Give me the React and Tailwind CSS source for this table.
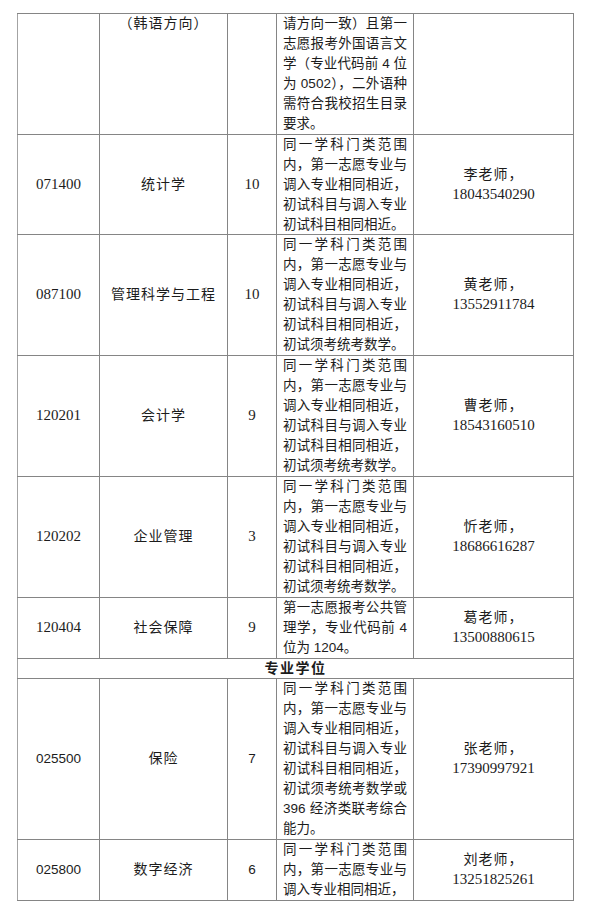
import React from 'react';

const CJK = "font-['Liberation_Sans','Noto_Sans_CJK_SC',sans-serif]";
const SERIF = "font-['Liberation_Serif','Noto_Sans_CJK_SC',serif]";

const SAME = ['同一学科门类范围', '内，第一志愿专业与', '调入专业相同相近，', '初试科目与调入专业'];

const rows = [
  {
    code: '',
    name: '（韩语方向）',
    nameTop: true,
    count: '',
    notes: ['请方向一致）且第一', '志愿报考外国语言文', '学（专业代码前 4 位', '为 0502），二外语种', '需符合我校招生目录', '要求。'],
    contact: null,
  },
  {
    code: '071400',
    name: '统计学',
    count: '10',
    notes: [...SAME, '初试科目相同相近。'],
    contact: ['李老师，', '18043540290'],
  },
  {
    code: '087100',
    name: '管理科学与工程',
    count: '10',
    notes: [...SAME, '初试科目相同相近，', '初试须考统考数学。'],
    contact: ['黄老师，', '13552911784'],
  },
  {
    code: '120201',
    name: '会计学',
    count: '9',
    notes: [...SAME, '初试科目相同相近，', '初试须考统考数学。'],
    contact: ['曹老师，', '18543160510'],
  },
  {
    code: '120202',
    name: '企业管理',
    count: '3',
    notes: [...SAME, '初试科目相同相近，', '初试须考统考数学。'],
    contact: ['忻老师，', '18686616287'],
  },
  {
    code: '120404',
    name: '社会保障',
    count: '9',
    notes: ['第一志愿报考公共管', '理学，专业代码前 4', '位为 1204。'],
    contact: ['葛老师，', '13500880615'],
  },
  { section: '专业学位' },
  {
    code: '025500',
    name: '保险',
    count: '7',
    sans: true,
    notes: [...SAME, '初试科目相同相近，', '初试须考统考数学或', '396 经济类联考综合', '能力。'],
    contact: ['张老师，', '17390997921'],
  },
  {
    code: '025800',
    name: '数字经济',
    count: '6',
    sans: true,
    notes: ['同一学科门类范围', '内，第一志愿专业与', '调入专业相同相近，'],
    contact: ['刘老师，', '13251825261'],
  },
];

const cell = 'border border-[#858585] p-0 leading-[19.95px]';
const firstCol = 'border-l-[#a3a3a3]';

export default function App() {
  return (
    <div className="min-h-[914px] w-[589px] bg-white pt-[13px] pl-[17px] text-[#1c1c1c]">
      <table className="w-[556px] table-fixed border-collapse border-t border-t-[#444]">
        <colgroup>
          <col className="w-[82px]" />
          <col className="w-[128px]" />
          <col className="w-[49px]" />
          <col className="w-[137px]" />
          <col className="w-[160px]" />
        </colgroup>
        <tbody>
          {rows.map((r, i) =>
            r.section ? (
              <tr key={i}>
                <td
                  colSpan="5"
                  className={`${cell} ${firstCol} text-center text-[14px] font-bold tracking-[1.5px] ${CJK}`}
                >
                  {r.section}
                </td>
              </tr>
            ) : (
              <tr key={i}>
                <td
                  className={`${cell} ${firstCol} text-center align-middle ${
                    r.sans ? "text-[13.5px] font-['Liberation_Sans',sans-serif]" : `text-[15px] ${SERIF}`
                  }`}
                >
                  {r.code}
                </td>
                <td
                  className={`${cell} text-center text-[14px] tracking-[1px] ${CJK} ${
                    r.nameTop ? 'align-top' : 'align-middle'
                  }`}
                >
                  {r.name}
                </td>
                <td
                  className={`${cell} text-center align-middle ${
                    r.sans ? "text-[13.5px] font-['Liberation_Sans',sans-serif]" : `text-[15px] ${SERIF}`
                  }`}
                >
                  {r.count}
                </td>
                <td className={`${cell} px-[6px] align-top text-[13.5px] ${CJK}`}>
                  {r.notes.map((line, j) => (
                    <div
                      key={j}
                      className={`whitespace-nowrap ${
                        j < r.notes.length - 1 ? 'text-justify [text-align-last:justify]' : ''
                      }`}
                    >
                      {line}
                    </div>
                  ))}
                </td>
                <td className={`${cell} text-center align-middle`}>
                  {r.contact && (
                    <>
                      <div className={`text-[14px] tracking-[1px] ${CJK}`}>{r.contact[0]}</div>
                      <div className={`text-[15px] ${SERIF}`}>{r.contact[1]}</div>
                    </>
                  )}
                </td>
              </tr>
            )
          )}
        </tbody>
      </table>
    </div>
  );
}
